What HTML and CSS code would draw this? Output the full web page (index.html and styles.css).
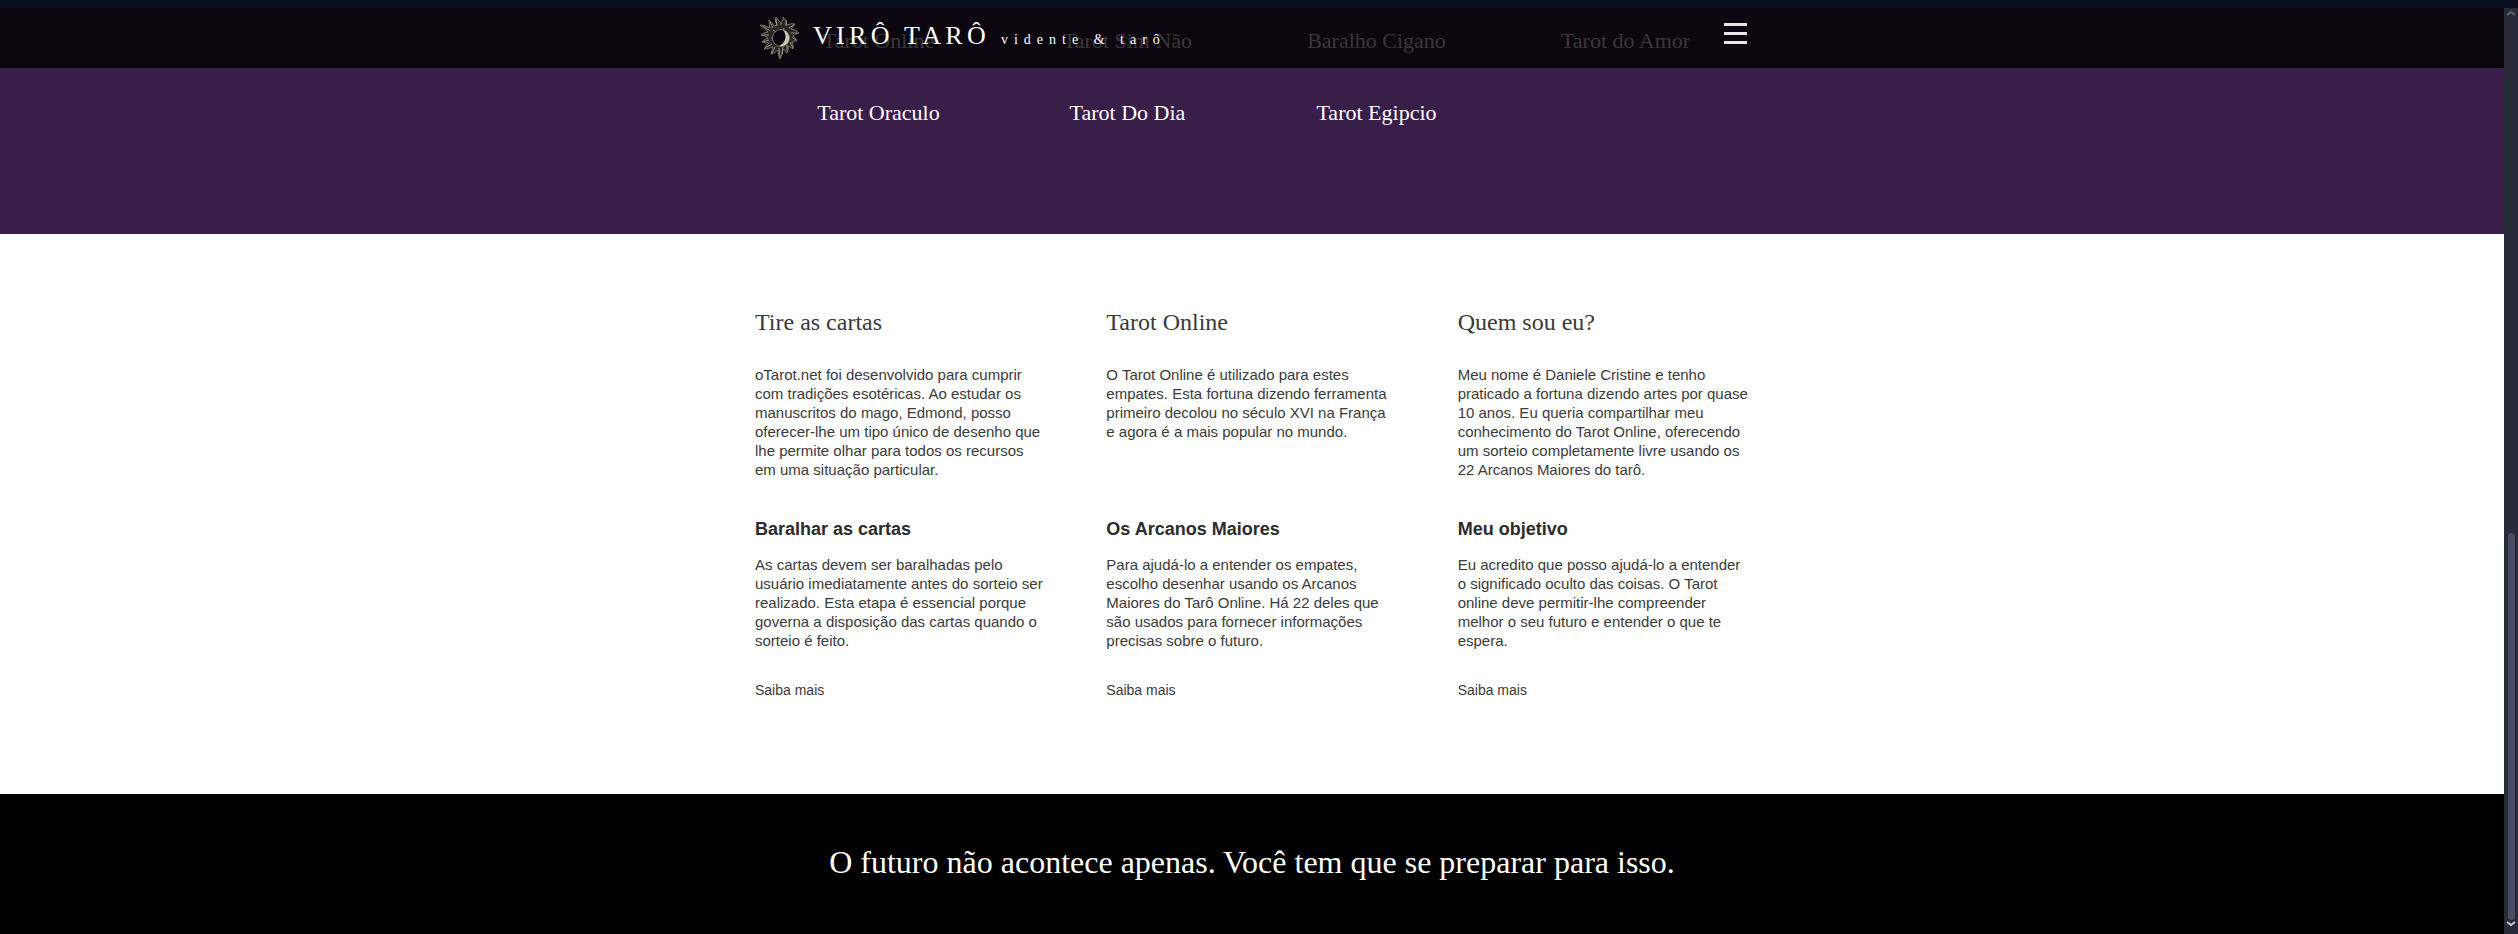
FILE: index.html
```html
<!DOCTYPE html>
<html lang="pt">
<head>
<meta charset="utf-8">
<title>Virô Tarô</title>
<link rel="stylesheet" href="styles.css">
</head>
<body>
<div class="strip"></div>
<div class="window">
  <div class="page">
    <header class="topbar">
      <div class="brand">
        <svg class="logo" viewBox="0 0 40 44" width="40" height="44" aria-hidden="true">
          <g fill="#2a2622" stroke="#8f8878" stroke-width=".8" stroke-linejoin="round">
            <path d="M17 9 Q14 5 16 1 Q18 4 21 7 Q24 4 23 1 Q27 4 27 9 Q31 7 35 8 Q33 11 31 13 Q35 13 39 17 Q35 18 33 20 Q36 22 37 25 Q33 25 32 26 Q34 30 33 33 Q30 31 28 30 Q29 34 27 37 Q25 34 23 33 Q23 38 20 43 Q18 39 18 34 Q15 37 11 38 Q12 34 13 31 Q9 33 4 33 Q6 29 9 27 Q6 27 2 26 Q5 23 8 22 Q4 19 1 19 Q4 16 8 16 Q4 12 0 9 Q5 9 10 12 Q9 8 9 4 Q12 6 14 10 Z"/>
          </g>
          <g fill="none" stroke="#c4bcaa" stroke-width=".7">
            <path d="M17 10 L16 3 M21 9 L21 7 M26 10 L26 4 M29 12 L34 9 M31 17 L37 17 M32 21 L36 24 M30 26 L33 32 M27 29 L27 35 M23 31 L22 38 M19 32 L20 41 M15 31 L12 37 M12 28 L5 32 M9 24 L3 26 M9 19 L3 19 M10 15 L3 10 M13 12 L10 6"/>
            <path d="M13 14 L16 16 M24 12 L22 16 M29 19 L26 20 M26 27 L24 25 M17 29 L18 26 M11 22 L14 22"/>
          </g>
          <circle cx="21" cy="22" r="8.5" fill="#0b0610" stroke="#8f8878" stroke-width=".8"/>
          <path d="M23 14 A8 8 0 0 1 19 30 A10 10 0 0 0 23 14 Z" fill="#cfc7b5"/>
        </svg>
        <span class="brand-name">VIRÔ TARÔ</span>
        <span class="brand-sub">vidente &amp; tarô</span>
      </div>
      <button class="burger" type="button" aria-label="Menu"><span></span><span></span><span></span></button>
    </header>

    <nav class="hero">
      <div class="nav-grid">
        <a>Tarot Online</a>
        <a>Tarot Sim Não</a>
        <a>Baralho Cigano</a>
        <a>Tarot do Amor</a>
        <a>Tarot Oraculo</a>
        <a>Tarot Do Dia</a>
        <a>Tarot Egipcio</a>
      </div>
    </nav>

    <main class="info">
      <div class="columns">
        <section class="col">
          <h2>Tire as cartas</h2>
          <p class="lead">oTarot.net foi desenvolvido para cumprir com tradições esotéricas. Ao estudar os manuscritos do mago, Edmond, posso oferecer-lhe um tipo único de desenho que lhe permite olhar para todos os recursos em uma situação particular.</p>
          <h3>Baralhar as cartas</h3>
          <p class="body">As cartas devem ser baralhadas pelo usuário imediatamente antes do sorteio ser realizado. Esta etapa é essencial porque governa a disposição das cartas quando o sorteio é feito.</p>
          <a class="more">Saiba mais</a>
        </section>
        <section class="col">
          <h2>Tarot Online</h2>
          <p class="lead">O Tarot Online é utilizado para estes empates. Esta fortuna dizendo ferramenta primeiro decolou no século XVI na França e agora é a mais popular no mundo.</p>
          <h3>Os Arcanos Maiores</h3>
          <p class="body">Para ajudá-lo a entender os empates, escolho desenhar usando os Arcanos Maiores do Tarô Online. Há 22 deles que são usados para fornecer informações precisas sobre o futuro.</p>
          <a class="more">Saiba mais</a>
        </section>
        <section class="col">
          <h2>Quem sou eu?</h2>
          <p class="lead">Meu nome é Daniele Cristine e tenho praticado a fortuna dizendo artes por quase 10 anos. Eu queria compartilhar meu conhecimento do Tarot Online, oferecendo um sorteio completamente livre usando os 22 Arcanos Maiores do tarô.</p>
          <h3>Meu objetivo</h3>
          <p class="body">Eu acredito que posso ajudá-lo a entender o significado oculto das coisas. O Tarot online deve permitir-lhe compreender melhor o seu futuro e entender o que te espera.</p>
          <a class="more">Saiba mais</a>
        </section>
      </div>
    </main>

    <footer class="quote">O futuro não acontece apenas. Você tem que se preparar para isso.</footer>
  </div>

  <div class="scrollbar" aria-hidden="true">
    <svg class="arrow" viewBox="0 0 14 10" width="14" height="10"><path d="M3 7 L7 4 L11 7" fill="none" stroke="#5d6170" stroke-width="2"/></svg>
    <div class="thumb"></div>
    <svg class="arrow" viewBox="0 0 14 8" width="14" height="8"><path d="M3 2 L7 5 L11 2" fill="none" stroke="#c9cbd2" stroke-width="2"/></svg>
  </div>
</div>
</body>
</html>
```
FILE: styles.css
```css
* { box-sizing: border-box; }
html, body { margin: 0; padding: 0; height: 100%; overflow: hidden; background: #000; }
body { display: flex; flex-direction: column; font-family: "Liberation Sans", Arial, sans-serif; color: #333; }

.strip { height: 8px; flex: none; background: #0a0f1f; }
.window { flex: 1; display: flex; min-height: 0; }
.page { flex: 1; min-width: 0; position: relative; display: flex; flex-direction: column; }

.topbar {
  position: absolute; top: 0; left: 0; right: 0; height: 60px; z-index: 2;
  background: rgba(0, 0, 0, .79);
}
.brand { position: absolute; left: 760px; top: 0; height: 60px; display: flex; align-items: center; color: #fff; font-family: "Liberation Serif", "Times New Roman", serif; white-space: nowrap; }
.logo { flex: none; }
.brand-name { margin-left: 13px; margin-bottom: 4px; font-size: 26px; letter-spacing: 4.3px; }
.brand-sub { margin-left: 11px; margin-top: 4px; font-size: 14px; letter-spacing: 6px; }

.burger { position: absolute; left: 1724px; top: 15px; width: 23px; height: 21px; padding: 0; border: 0; background: none; display: flex; flex-direction: column; justify-content: space-between; }
.burger span { display: block; height: 3px; background: #e8e8e8; }

.hero { height: 226px; flex: none; background: #391e49; }
.nav-grid { width: 996px; margin: 0 auto; display: grid; grid-template-columns: repeat(4, 1fr); grid-auto-rows: 72px; font-family: "Liberation Serif", "Times New Roman", serif; }
.nav-grid a { display: flex; align-items: center; justify-content: center; height: 66px; color: #fff; font-size: 22px; }

.info { flex: none; height: 560px; background: #fff; }
.columns { width: 1054px; margin: 0 auto; display: grid; grid-template-columns: repeat(3, 1fr); }
.col { padding: 0 30px; }
.col h2 { margin: 74px 0 0; font: 400 24px/28px "Liberation Serif", "Times New Roman", serif; color: #3a3a3a; }
.lead { margin: 29px 0 0; height: 114px; font-size: 15px; line-height: 19px; color: #3a3a3a; }
.col h3 { margin: 40px 0 0; font-size: 18px; line-height: 20px; font-weight: 700; color: #2b2b2b; }
.body { margin: 16px 0 0; height: 95px; font-size: 15px; line-height: 19px; color: #3a3a3a; }
.more { display: block; margin-top: 32px; font-size: 14px; line-height: 16px; color: #3a3a3a; }

.quote { flex: 1; background: #000; color: #fff; text-align: center; padding-top: 48px; font: 400 32px/40px "Liberation Serif", "Times New Roman", serif; }

.scrollbar { flex: none; width: 14px; background: #272b38; display: flex; flex-direction: column; }
.arrow { flex: none; display: block; }
.thumb { width: 7px; height: 387px; margin: 515px 0 0 4px; background: #484d66; border-radius: 4px; }
```
